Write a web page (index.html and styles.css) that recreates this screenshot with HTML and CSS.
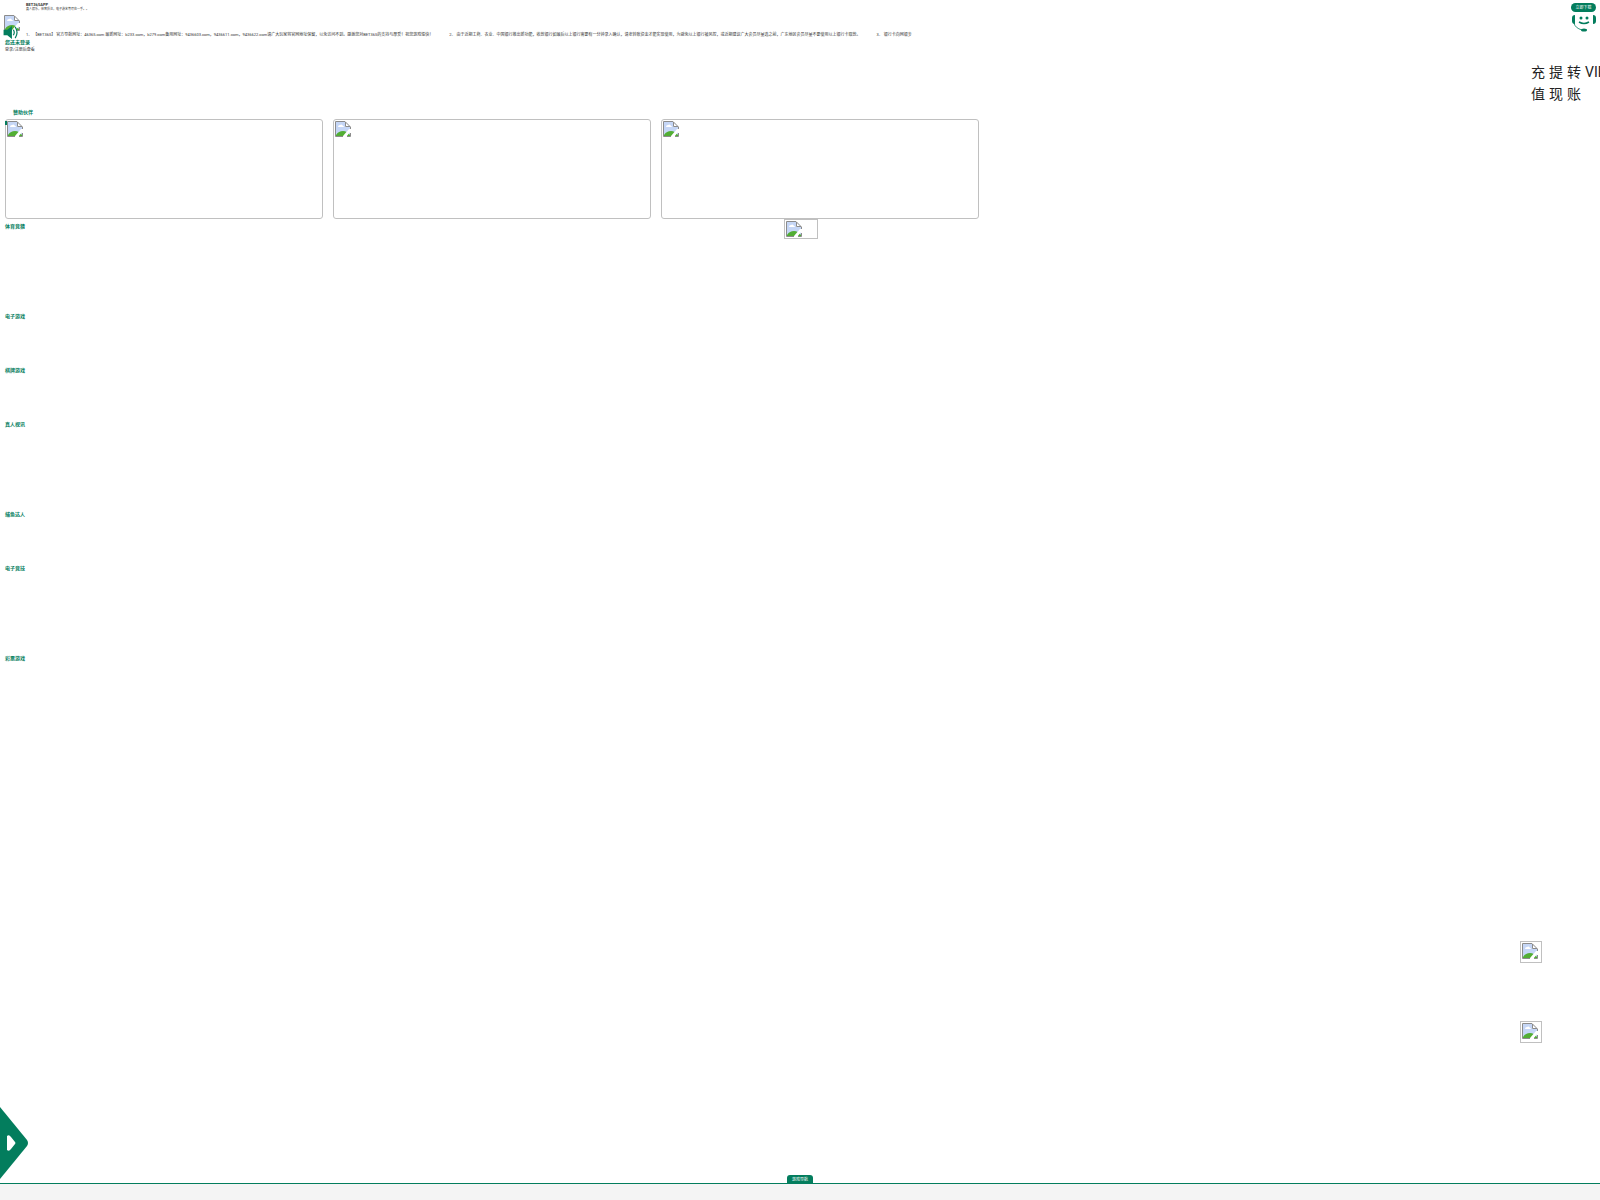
FILE: index.html
```
<!DOCTYPE html>
<html lang="zh-CN">
<head>
  <meta charset="UTF-8">
  <meta name="viewport" content="width=device-width, initial-scale=1.0">
  <title>BET365APP</title>
  <link rel="stylesheet" href="styles.css">
</head>
<body>

<svg class="defs" aria-hidden="true">
  <symbol id="icon-image" viewBox="0 0 16 16">
    <path d="M1 1h9l5 5v9H1z" fill="#c5d6f6"/>
    <path d="M3 6a2 2 0 0 1 2-2 2 2 0 0 1 3 1 1 1 0 0 1 1 1z" fill="#fff"/>
    <path d="M1 15v-1c2-3 4-4 7-4s5 2 7 4v1z" fill="#52ae34"/>
    <path d="M10 1v5h5z" fill="#fff"/>
    <path d="M16 8v2l-5 6H8v-1l6-7z" fill="#fff"/>
    <path d="M8 15.500H.5V.5H10l5.500 5.500v2M10.500 1v4.500H15M12 15.500h3.500V12" fill="none" stroke="#8c8c8c"/>
  </symbol>
</svg>

<header class="app-bar">
  <div class="app-info">
    <strong>BET365APP</strong>
    <p>真人娱乐，体育投注，电子游艺等尽在一手。。</p>
  </div>
  <div class="app-actions">
    <button class="download">立即下载</button>
    <a class="service" href="#" aria-label="在线客服">
      <svg viewBox="0 0 24 18">
        <path d="M0 4q0-3 3-3v9q-3 0-3-3zM24 4q0-3-3-3v9q3 0 3-3z" fill="#037d5d"/>
        <circle cx="9" cy="4" r="1.500" fill="#037d5d"/>
        <circle cx="15" cy="4" r="1.500" fill="#037d5d"/>
        <path d="M7 8q5 3 10 0" fill="none" stroke="#037d5d" stroke-width="1.500"/>
        <path d="M2 9q1 5 8 7" fill="none" stroke="#037d5d" stroke-width=".8"/>
        <ellipse cx="12" cy="16" rx="3" ry="1.500" fill="#037d5d"/>
      </svg>
    </a>
  </div>
</header>

<main>
  <div class="avatar"><svg><use href="#icon-image"/></svg></div>

  <section class="notice">
    <svg class="speaker" viewBox="0 0 16 14">
      <path d="M0 4h4l5-4v14l-5-4H0z" fill="#037d5d"/>
      <path d="M10.500 4q2 3 0 6M12.500 1q4 6 0 12" fill="none" stroke="#037d5d" stroke-width="1.300"/>
    </svg>
    <ul>
      <li>1、 【BET365】 官方导航网址：46365.com 最新网址：b233.com，b279.com备用网址：9436603.com，9436611.com，9436622.com请广大玩家将官网地址保留，以免访问不到。感谢您对BET365的支持与厚爱！祝您游戏愉快！</li>
      <li>2、 由于近期工商、农业、中国银行推出新功能，收款银行如最后以上银行需要有一分钟录入确认，请老转账资金才能实现使用，为避免以上银行被风控，或近期建议广大会员尽量选之前，广东地区会员尽量不要使用以上银行卡取款。</li>
      <li>3、 银行卡向网银步</li>
    </ul>
  </section>

  <section class="member">
    <h2>您还未登录</h2>
    <a href="#">登录/注册后查看</a>
  </section>

  <nav class="wallet">
    <a href="#">充值</a>
    <a href="#">提现</a>
    <a href="#">转账</a>
    <a href="#">VIP</a>
  </nav>

  <section class="partners">
    <h2>赞助伙伴</h2>
    <div class="banners">
      <a class="image" href="#" aria-label="赞助伙伴"><svg><use href="#icon-image"/></svg></a>
      <a class="image" href="#" aria-label="赞助伙伴"><svg><use href="#icon-image"/></svg></a>
      <a class="image" href="#" aria-label="赞助伙伴"><svg><use href="#icon-image"/></svg></a>
    </div>
  </section>

  <div class="games">
    <a class="image game-logo" href="#" aria-label="体育竞猜"><svg><use href="#icon-image"/></svg></a>
    <section class="tall"><h2>体育竞猜</h2></section>
    <section><h2>电子游戏</h2></section>
    <section><h2>棋牌游戏</h2></section>
    <section class="tall"><h2>真人视讯</h2></section>
    <section><h2>捕鱼达人</h2></section>
    <section class="tall"><h2>电子竞技</h2></section>
    <section><h2>彩票游戏</h2></section>
  </div>
</main>

<aside class="floats">
  <a class="image" href="#" aria-label="活动"><svg><use href="#icon-image"/></svg></a>
  <a class="image" href="#" aria-label="红包"><svg><use href="#icon-image"/></svg></a>
</aside>

<button class="drawer" aria-label="展开">
  <svg viewBox="0 0 28 72">
    <path d="M0 0l27 33q2 3 0 6L0 72z" fill="#037d5d"/>
    <path d="M7 29q2-2 4 1l4 5q1 1 0 2l-4 5q-2 3-4 1z" fill="#fff"/>
  </svg>
</button>

<footer class="tab-bar">
  <button>游戏导航</button>
</footer>

</body>
</html>
```

FILE: styles.css
```
* {
  box-sizing: border-box;
}

body {
  margin: 0;
  min-height: 100vh;
  overflow: hidden;
  position: relative;
  background: #fff;
  color: #333;
  font-family: Roboto, "Noto Sans CJK SC", sans-serif;
  font-size: 4px;
  line-height: 7px;
}

h2,
p,
ul {
  margin: 0;
  padding: 0;
}

h2 {
  color: #037d5d;
  font-size: 5px;
  line-height: 8px;
}

a {
  color: inherit;
  text-decoration: none;
}

button {
  padding: 0;
  border: 0;
  background: #037d5d;
  color: #fff;
  font-family: inherit;
  cursor: pointer;
}

svg {
  display: block;
}

.defs {
  position: absolute;
  width: 0;
  height: 0;
}

/* top bar */
.app-bar {
  display: flex;
  justify-content: space-between;
  height: 15px;
  padding: 2px 4px 0 26px;
}

.app-info {
  line-height: 5px;
}

.app-info strong {
  display: block;
}

.app-info p {
  font-size: 3px;
}

.app-actions {
  display: flex;
  flex-direction: column;
  gap: 2px;
  width: 25px;
  padding-top: 1px;
}

.download {
  flex: none;
  height: 9px;
  border-radius: 5px;
  font-size: 4px;
  line-height: 7px;
}

.service svg {
  width: 24px;
  height: 18px;
  margin-left: 1px;
}

.avatar {
  height: 11px;
  padding-left: 4px;
}

.avatar svg {
  width: 16px;
  height: 16px;
}

.notice {
  display: flex;
  align-items: center;
  gap: 7px;
  height: 13px;
  padding-left: 3px;
  position: relative;
}

.speaker {
  flex: none;
  width: 16px;
  height: 13px;
}

.notice ul {
  display: flex;
  gap: 16px;
  padding-top: 3px;
  list-style: none;
  white-space: nowrap;
}

.member {
  padding-left: 5px;
}

.member h2 {
  line-height: 7px;
}

.member a {
  display: block;
}

.wallet {
  display: flex;
  justify-content: flex-end;
  gap: 4px;
  height: 47px;
  margin-top: 8px;
  padding-right: 1px;
  color: #222;
  font-size: 14px;
  line-height: 22px;
}

.wallet a {
  width: 14px;
}

.partners h2 {
  padding: 0 0 3px 13px;
}

.banners {
  display: flex;
  gap: 10px;
  padding-left: 5px;
  position: relative;
}

/* section marker, peeks out at the corner of the first banner */
.banners::before {
  content: "";
  position: absolute;
  top: 2px;
  left: 5px;
  width: 2px;
  height: 4px;
  background: #037d5d;
}

.image {
  display: block;
  padding: 1px;
  border: 1px solid #c0c0c0;
}

.image svg {
  width: 16px;
  height: 16px;
}

.banners .image {
  width: 318px;
  height: 100px;
  border-radius: 3px;
}

/* game lists */
.games {
  position: relative;
  padding: 3px 0 0 5px;
}

.games section {
  height: 54px;
}

.games .tall {
  height: 90px;
}

.game-logo {
  position: absolute;
  top: 0;
  left: 49%;
  width: 34px;
  height: 20px;
}

/* fixed pieces */
.floats {
  position: fixed;
  right: 58px;
  bottom: 157px;
  display: flex;
  flex-direction: column;
  gap: 58px;
}

.floats .image {
  width: 22px;
  height: 22px;
}

.drawer {
  position: fixed;
  left: 0;
  bottom: 21px;
  background: none;
}

.drawer svg {
  width: 28px;
  height: 72px;
}

.tab-bar {
  position: fixed;
  left: 0;
  right: 0;
  bottom: 0;
  display: flex;
  flex-direction: column;
  align-items: center;
}

.tab-bar button {
  width: 26px;
  height: 8px;
  border-radius: 3px 3px 0 0;
  font-size: 4px;
  line-height: 7px;
}

.tab-bar::after {
  content: "";
  width: 100%;
  height: 17px;
  margin-bottom: -1px;
  border-top: 1px solid #037d5d;
  background: #f4f4f4;
}
```
